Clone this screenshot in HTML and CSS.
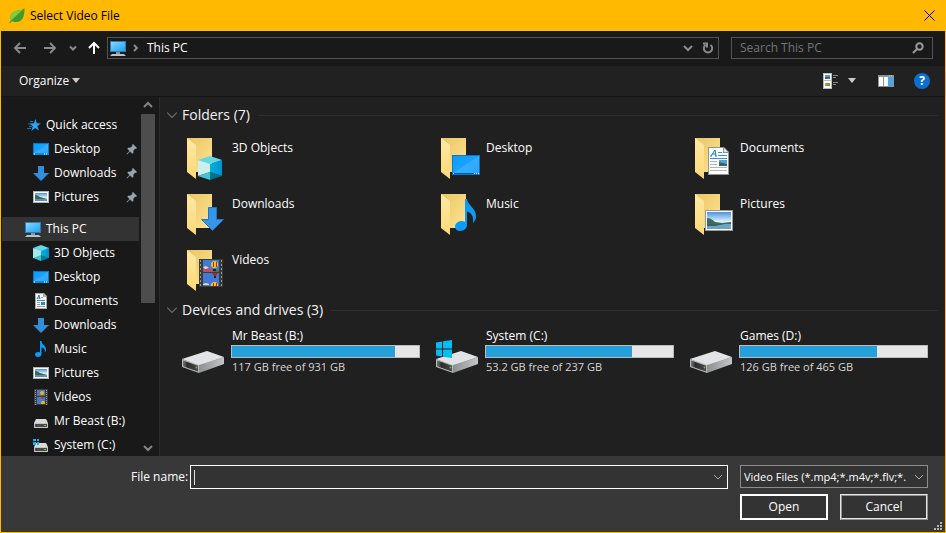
FILE: index.html
```
<!DOCTYPE html>
<html lang="en">

<head>
    <meta charset="utf-8">
    <title>Select Video File</title>
    <link rel="stylesheet" href="styles.css">
</head>

<body>
    <!-- Shared icons -->
    <svg class="sprite" width="0" height="0" aria-hidden="true">
        <defs>
            <linearGradient id="g-folder" x1="0" y1="0" x2="1" y2="1">
                <stop offset="0" stop-color="#e9c465" />
                <stop offset="1" stop-color="#ffe592" />
            </linearGradient>
            <linearGradient id="g-flap" x1="0" y1="0" x2="0" y2="1">
                <stop offset="0" stop-color="#ffe8a4" />
                <stop offset="1" stop-color="#fbd978" />
            </linearGradient>
            <linearGradient id="g-blue" x1="0" y1="0" x2="1" y2="1">
                <stop offset="0" stop-color="#0a9bff" />
                <stop offset="0.5" stop-color="#1aa2ff" />
                <stop offset="0.51" stop-color="#36adff" />
                <stop offset="1" stop-color="#2aa5ff" />
            </linearGradient>
            <linearGradient id="g-screen" x1="0" y1="0" x2="1" y2="1">
                <stop offset="0" stop-color="#8fd6ff" />
                <stop offset="0.5" stop-color="#4fbcfc" />
                <stop offset="1" stop-color="#22a4f5" />
            </linearGradient>
            <linearGradient id="g-sky" x1="0" y1="0" x2="0" y2="1">
                <stop offset="0" stop-color="#4f92e0" />
                <stop offset="0.55" stop-color="#d9effa" />
                <stop offset="1" stop-color="#b5d6ea" />
            </linearGradient>
            <linearGradient id="g-right" x1="0" y1="0" x2="1" y2="0">
                <stop offset="0" stop-color="#00b4d8" />
                <stop offset="1" stop-color="#0090d8" />
            </linearGradient>
            <linearGradient id="g-face" x1="0" y1="0" x2="1" y2="0">
                <stop offset="0" stop-color="#777" />
                <stop offset="0.3" stop-color="#2c2c2c" />
                <stop offset="1" stop-color="#4a4a4a" />
            </linearGradient>
            <linearGradient id="g-side" x1="0" y1="0" x2="1" y2="0">
                <stop offset="0" stop-color="#8d8f91" />
                <stop offset="1" stop-color="#c3c5c7" />
            </linearGradient>
        </defs>

        <symbol id="i-pc" viewBox="0 0 16 16">
            <rect x="0" y="1" width="16" height="11" fill="#2b7fb8" />
            <rect x="1" y="2" width="14" height="9" fill="url(#g-screen)" />
            <rect x="6" y="12" width="4" height="2" fill="#8a9298" />
            <path d="M2 14h12l2 2H0z" fill="#b9c2ca" />
        </symbol>
        <symbol id="i-star" viewBox="0 0 16 16">
            <path d="M10.600 2l1.100 4.300 4.300.2-3.600 2.600 1.500 4.500-3.700-2.700L6.300 14l1.500-4.700L4.500 6.500l4.300-.2z" fill="#2ea3f2" />
            <path d="M5 4.500h3M3 7h3M4 9.500h3M2 11.500h4" stroke="#1577c2" />
        </symbol>
        <symbol id="i-desktop" viewBox="0 0 16 16">
            <rect x="0" y="2" width="16" height="12" fill="#0878cc" />
            <rect x="1" y="3" width="14" height="9" fill="url(#g-blue)" />
            <rect x="0" y="12" width="16" height="2" fill="#1188d8" />
            <path d="M1 13h1M11 13h1M13 13h1" stroke="#fff" />
        </symbol>
        <symbol id="i-download" viewBox="0 0 16 16">
            <path d="M5 1h6v7h5l-8 8-8-8h5z" fill="#2f8fdd" />
        </symbol>
        <symbol id="i-picture" viewBox="0 0 16 16">
            <rect x="0" y="2" width="16" height="12" fill="#b4b4b4" />
            <rect x="1" y="3" width="14" height="10" fill="#fff" />
            <rect x="2" y="4" width="12" height="8" fill="url(#g-sky)" />
            <path d="M2 6q3 0 5 2l7 2v1H2z" fill="#3a6654" />
            <path d="M2 10h12v2H2z" fill="#5b92b4" />
        </symbol>
        <symbol id="i-cube" viewBox="0 0 16 16">
            <path d="M0 3l8 2v8l-8 0z" fill="#a8e8ec" />
            <path d="M16 3L8 5v8l8 0z" fill="url(#g-right)" />
            <path d="M8 0l8 3-8 3-8-3z" fill="#63d7e6" />
            <path d="M0 13l8-3v6z" fill="#3fc0cc" />
            <path d="M16 13l-8-3v6z" fill="#007c9c" />
        </symbol>
        <symbol id="i-document" viewBox="0 0 16 16">
            <path d="M2 0h9l3 3v13H2z" fill="#aaa" />
            <path d="M3 1h7v3h3v11H3z" fill="#fff" />
            <path d="M4 6l2-4 1 4M5 5h2" fill="none" stroke="#1a7cc8" />
            <path d="M4 7.500h8" stroke="#2e94dd" />
            <path d="M8 4.500h2M4 9.500h3M4 11.500h3M4 13.500h8" stroke="#9a9a9a" />
            <rect x="8" y="9" width="4" height="3" fill="#3885b6" />
        </symbol>
        <symbol id="i-music" viewBox="0 0 16 16">
            <path d="M7 0h1.500c0 4 5 4.500 4.500 9-.1 1-.6 2-1.300 2.600.8-3-1-4.600-3.200-5.100V13c0 1.700-1.500 3-3.500 3S2 15 2 13.500 3.500 11 5.200 11c.7 0 1.300.1 1.800.4z" fill="#0c9bf5" />
        </symbol>
        <symbol id="i-video" viewBox="0 0 16 16">
            <rect x="1" y="0" width="14" height="16" fill="#3c3c3c" />
            <path d="M2.500 1v15M13.500 1v15" stroke="#999" stroke-dasharray="1 1" />
            <rect x="4" y="1" width="8" height="6" fill="#447cd0" />
            <rect x="4" y="8" width="8" height="7" fill="#447cd0" />
            <circle cx="9" cy="4" r="2" fill="#e0b41c" />
            <path d="M4 6h4v1H4z" fill="#bb4763" />
            <path d="M8 6h4v1H8z" fill="#37803b" />
            <path d="M8 13l1-1h2l1 1v2H8z" fill="#e0b41c" />
            <path d="M8 8h3l-1 2H9z" fill="#b33" />
        </symbol>
        <symbol id="i-drive" viewBox="0 0 16 16">
            <path d="M3 6h10l2 4H1z" fill="#d9dadb" />
            <rect x="1" y="10" width="14" height="5" fill="#c4c4c4" />
            <rect x="2" y="11" width="12" height="3" fill="#4a4a4a" />
            <rect x="11" y="12" width="2" height="1" fill="#3fe23f" />
        </symbol>
        <symbol id="i-sysdrive" viewBox="0 0 16 16">
            <path d="M3 6h10l2 4H1z" fill="#d9dadb" />
            <rect x="1" y="10" width="14" height="5" fill="#c4c4c4" />
            <rect x="2" y="11" width="12" height="3" fill="#4a4a4a" />
            <rect x="11" y="12" width="2" height="1" fill="#3fe23f" />
            <path d="M0 2h3v2H0zM4 2h2v2H4zM0 5h3v3H0zM4 5h2v3H4z" fill="#13b4f2" />
        </symbol>
        <symbol id="i-pin" viewBox="0 0 12 12">
            <path d="M7 1l4 4-1 1-1-.3L7.500 7.500 7.300 10l-1 .7-2.300-2.300L1 11.500l-.5-.5 3-3L1.300 5.700l.8-1 2.400-.2L6.300 3 6 2z" fill="#98a3ac" />
        </symbol>
        <symbol id="i-chevron" viewBox="0 0 10 10">
            <path d="M1 3l4 4 4-4" fill="none" stroke="currentColor" />
        </symbol>
        <symbol id="i-folder" viewBox="0 0 48 48">
            <path d="M5 4h25v34H5z" fill="url(#g-folder)" />
            <path d="M5 4l9 7v34l-9-7z" fill="url(#g-flap)" />
        </symbol>
        <symbol id="i-bigdrive" viewBox="0 0 48 48">
            <path d="M0 31l25-8 17 6-25 9z" fill="#e2e3e5" />
            <path d="M17 37l25-8v7l-25 9z" fill="url(#g-side)" />
            <path d="M0 31l17 6v8L0 39z" fill="#b5b7b8" />
            <path d="M1 32.500l15 5.300v5.800L1 38.200z" fill="url(#g-face)" />
            <circle cx="14.500" cy="39.500" r="1" fill="#35d63a" />
        </symbol>
    </svg>

    <div class="window">
        <header class="title-bar">
            <svg class="leaf" viewBox="0 0 16 16" aria-hidden="true">
                <path d="M15.500 0C15.500 8 14 14 7 14c-2 0-3-.3-4-1L1 15.500l-.7-.5L2 12C0 6 4 3 9 2.500c3-.3 5-1 6.500-2.500z" fill="#3f9b2f" />
                <path d="M15.500 0C14 1.500 12 2.200 9 2.500 3 3 0 7 2 12.500z" fill="#86cb3e" />
            </svg>
            <span class="title">Select Video File</span>
            <button class="close" aria-label="Close">
                <svg viewBox="0 0 11 11"><path d="M.5.5l10 10M10.500.5l-10 10" stroke="#000" /></svg>
            </button>
        </header>

        <nav class="nav-bar">
            <button class="nav-button" aria-label="Back">
                <svg viewBox="0 0 14 14"><path d="M13 7H2M7 2L2 7l5 5" /></svg>
            </button>
            <button class="nav-button" aria-label="Forward">
                <svg viewBox="0 0 14 14"><path d="M1 7h11M7 2l5 5-5 5" /></svg>
            </button>
            <button class="nav-button recent" aria-label="Recent locations">
                <svg viewBox="0 0 8 8"><path d="M1 2.500l3 3 3-3" /></svg>
            </button>
            <button class="nav-button up" aria-label="Up">
                <svg viewBox="0 0 14 14"><path d="M7 13V2M2 7l5-5 5 5" /></svg>
            </button>
            <div class="address">
                <svg class="icon"><use href="#i-pc" /></svg>
                <svg class="crumb" viewBox="0 0 6 8"><path d="M1 1l3 3-3 3" /></svg>
                <a href="#">This PC</a>
                <button class="address-button" aria-label="Previous locations">
                    <svg viewBox="0 0 12 12"><path d="M2 4l4 4 4-4" /></svg>
                </button>
                <button class="address-button refresh" aria-label="Refresh">
                    <svg viewBox="0 0 12 12"><path d="M8.500 3A4.200 4.200 0 1 1 3.500 3M1 1.500h4v4" /></svg>
                </button>
            </div>
            <div class="search">
                <input type="text" placeholder="Search This PC" aria-label="Search This PC">
                <svg viewBox="0 0 12 12"><circle cx="7.500" cy="4.500" r="3.200" /><path d="M5 7l-4 4" /></svg>
            </div>
        </nav>

        <div class="toolbar">
            <button class="organize">Organize <span class="arrow"></span></button>
            <button class="view" aria-label="Change your view">
                <svg viewBox="0 0 16 16">
                    <path d="M0 0h9v16H0z" fill="#bbb" />
                    <path d="M1 1h7v6H1zM1 8h7v7H1z" fill="#fff" />
                    <path d="M2 2h5v2H2z" fill="#4f92e0" />
                    <path d="M2 4h5v2H2z" fill="#346d71" />
                    <path d="M2 10h5v3H2z" fill="#6aa343" />
                    <path d="M2 10h2v2H2z" fill="#e08d2d" />
                    <path d="M10 2.500h5M10 4.500h3M10 9.500h5M10 11.500h3" stroke="#888" />
                </svg>
                <span class="arrow"></span>
            </button>
            <button class="preview" aria-label="Preview pane">
                <svg viewBox="0 0 16 12">
                    <path d="M0 0h16v12H0z" fill="#8c9299" />
                    <path d="M1 2h4v9H1zM6 2h4v9H6z" fill="#fff" />
                    <path d="M10 2h5v9h-5z" fill="#4aa5ec" />
                    <path d="M11 1h1M13 1h1" stroke="#ddd" />
                </svg>
            </button>
            <button class="help" aria-label="Help">?</button>
        </div>

        <div class="content">
            <aside class="sidebar">
                <ul class="tree">
                    <li class="root"><svg class="icon"><use href="#i-star" /></svg><a href="#">Quick access</a></li>
                    <li><svg class="icon"><use href="#i-desktop" /></svg><a href="#">Desktop</a><svg class="pin"><use href="#i-pin" /></svg></li>
                    <li><svg class="icon"><use href="#i-download" /></svg><a href="#">Downloads</a><svg class="pin"><use href="#i-pin" /></svg></li>
                    <li><svg class="icon"><use href="#i-picture" /></svg><a href="#">Pictures</a><svg class="pin"><use href="#i-pin" /></svg></li>
                </ul>
                <ul class="tree">
                    <li class="root selected"><svg class="icon"><use href="#i-pc" /></svg><a href="#">This PC</a></li>
                    <li><svg class="icon"><use href="#i-cube" /></svg><a href="#">3D Objects</a></li>
                    <li><svg class="icon"><use href="#i-desktop" /></svg><a href="#">Desktop</a></li>
                    <li><svg class="icon"><use href="#i-document" /></svg><a href="#">Documents</a></li>
                    <li><svg class="icon"><use href="#i-download" /></svg><a href="#">Downloads</a></li>
                    <li><svg class="icon"><use href="#i-music" /></svg><a href="#">Music</a></li>
                    <li><svg class="icon"><use href="#i-picture" /></svg><a href="#">Pictures</a></li>
                    <li><svg class="icon"><use href="#i-video" /></svg><a href="#">Videos</a></li>
                    <li><svg class="icon"><use href="#i-drive" /></svg><a href="#">Mr Beast (B:)</a></li>
                    <li><svg class="icon"><use href="#i-sysdrive" /></svg><a href="#">System (C:)</a></li>
                </ul>
            </aside>
            <div class="scrollbar">
                <button class="scroll-up" aria-label="Scroll up"><svg><use href="#i-chevron" /></svg></button>
                <div class="track"><div class="thumb"></div></div>
                <button aria-label="Scroll down"><svg><use href="#i-chevron" /></svg></button>
            </div>

            <main class="files">
                <h2><svg><use href="#i-chevron" /></svg>Folders (7)</h2>
                <div class="grid folders">
                    <a class="item" href="#">
                        <svg viewBox="0 0 48 48">
                            <use href="#i-folder" />
                            <path d="M16 26l12 4v8l-12 4z" fill="#c9f1f2" />
                            <path d="M40 26l-12 4v8l12 4z" fill="url(#g-right)" />
                            <path d="M28 22l12 4-12 4-12-4z" fill="#63d7e6" />
                            <path d="M16 42l12-4v8z" fill="#41c6d3" />
                            <path d="M40 42l-12-4v8z" fill="#007391" />
                        </svg>
                        <span>3D Objects</span>
                    </a>
                    <a class="item" href="#">
                        <svg viewBox="0 0 48 48">
                            <use href="#i-folder" />
                            <rect x="16" y="21" width="28" height="20" fill="#0878cc" />
                            <rect x="17" y="22" width="26" height="17" fill="url(#g-blue)" />
                            <rect x="17" y="39" width="26" height="1" fill="#0a5c9c" />
                            <path d="M17 39.500h1M38 39.500h1M40 39.500h1M42 39.500h1" stroke="#fff" />
                        </svg>
                        <span>Desktop</span>
                    </a>
                    <a class="item" href="#">
                        <svg viewBox="0 0 48 48">
                            <use href="#i-folder" />
                            <path d="M18 13h16l5 5v23H18z" fill="#8f9499" />
                            <path d="M19 14h14v5h5v21H19z" fill="#fff" />
                            <path d="M34 14l4 4h-4z" fill="#e4e4e4" />
                            <path d="M21 22l4-6 1 6M22 20h4M20 22h2M25 22h2" fill="none" stroke="#1a7cc8" />
                            <path d="M28 18.500h4M28 21.500h9M20 24.500h17" stroke="#2e94dd" />
                            <path d="M20 27.500h7M20 30.500h7M20 33.500h17M20 36.500h17" stroke="#b4b4b4" />
                            <rect x="29" y="26" width="8" height="6" fill="#5d9fd8" />
                            <path d="M29 28l8 2v2h-8z" fill="#376d58" />
                        </svg>
                        <span>Documents</span>
                    </a>
                    <a class="item" href="#">
                        <svg viewBox="0 0 48 48">
                            <use href="#i-folder" />
                            <path d="M26.500 17.500h8v12h7L30.500 40.500l-11-11h7z" fill="#3795e8" stroke="#1f75bf" />
                        </svg>
                        <span>Downloads</span>
                    </a>
                    <a class="item" href="#">
                        <svg viewBox="0 0 48 48">
                            <use href="#i-folder" />
                            <path d="M29 9h2c1 7 9 9 9 17 0 3-1 5-3 7 1-7-2-10.500-6-11.500V35c0 3-3 6-7 6-3 0-5-2-5-4.500 0-3 3-5.500 6.500-5.500 1.500 0 2.500.3 3.500 1z" fill="#0c9bf5" />
                        </svg>
                        <span>Music</span>
                    </a>
                    <a class="item" href="#">
                        <svg viewBox="0 0 48 48">
                            <use href="#i-folder" />
                            <rect x="15" y="20" width="28" height="21" fill="#999" />
                            <rect x="16" y="21" width="26" height="19" fill="#fff" />
                            <rect x="17" y="22" width="24" height="17" fill="url(#g-sky)" />
                            <path d="M17 28q4 0 8 4l7 1 9-1v3H17z" fill="#3d6b5c" />
                            <path d="M17 34h24v5H17z" fill="#6fa5c4" />
                            <path d="M17 34h18l-10 2h-8z" fill="#36606a" />
                        </svg>
                        <span>Pictures</span>
                    </a>
                    <a class="item" href="#">
                        <svg viewBox="0 0 48 48">
                            <use href="#i-folder" />
                            <rect x="17" y="13" width="24" height="28" fill="#3b3b3b" />
                            <path d="M18.500 14v27M39.500 14v27" stroke="#999" stroke-dasharray="2 2" />
                            <path d="M21 14h16v12H21zM21 27h16v13H21z" fill="#3f7bd6" />
                            <path d="M21 24l4-2 6 2v2H21z" fill="#c8465f" />
                            <path d="M31 24h6v2h-6z" fill="#37803b" />
                            <path d="M21 21l3-1 3 2-4 1z" fill="#efd9a0" />
                            <circle cx="32.500" cy="18.500" r="3.500" fill="#f0c21b" />
                            <path d="M31.500 16v5M34.500 16v5" stroke="#b3261e" />
                            <path d="M31 23h3v2h-3z" fill="#222" />
                            <path d="M30 27h6l-2 3h-2z" fill="#b3261e" />
                            <path d="M32 30h2v2h-2z" fill="#222" />
                            <path d="M21 38l3-1 3 1v1h-6z" fill="#efd9a0" />
                            <path d="M29 40v-2l2-2h3l2 2v2z" fill="#f0c21b" />
                            <path d="M31.500 37v3M34.500 37v3" stroke="#b3261e" />
                        </svg>
                        <span>Videos</span>
                    </a>
                </div>

                <h2><svg><use href="#i-chevron" /></svg>Devices and drives (3)</h2>
                <div class="grid drives">
                    <a class="item" href="#">
                        <svg viewBox="0 0 48 48"><use href="#i-bigdrive" /></svg>
                        <div class="drive-info">
                            <span>Mr Beast (B:)</span>
                            <div class="usage"><div style="width: 87%"></div></div>
                            <span class="free">117 GB free of 931 GB</span>
                        </div>
                    </a>
                    <a class="item" href="#">
                        <svg viewBox="0 0 48 48">
                            <use href="#i-bigdrive" />
                            <path d="M0 14.500l6-1v7H0zM7 13.300l9-1.300v8.500H7zM0 21.500h6v7l-6-1zM7 21.500h9V30l-9-1.300z" fill="#00bdf2" />
                        </svg>
                        <div class="drive-info">
                            <span>System (C:)</span>
                            <div class="usage"><div style="width: 78%"></div></div>
                            <span class="free">53.2 GB free of 237 GB</span>
                        </div>
                    </a>
                    <a class="item" href="#">
                        <svg viewBox="0 0 48 48"><use href="#i-bigdrive" /></svg>
                        <div class="drive-info">
                            <span>Games (D:)</span>
                            <div class="usage"><div style="width: 73%"></div></div>
                            <span class="free">126 GB free of 465 GB</span>
                        </div>
                    </a>
                </div>
            </main>
        </div>

        <footer class="footer">
            <label for="file-name">File name:</label>
            <div class="file-name">
                <input type="text" id="file-name">
                <button aria-label="Show file names"><svg><use href="#i-chevron" /></svg></button>
            </div>
            <div class="actions">
                <div class="file-type">
                    <select aria-label="File type">
                        <option>Video Files (*.mp4;*.m4v;*.flv;*.</option>
                    </select>
                    <svg><use href="#i-chevron" /></svg>
                </div>
                <button class="open">Open</button>
                <button class="cancel">Cancel</button>
            </div>
            <svg class="grip" viewBox="0 0 8 8" aria-hidden="true">
                <path d="M6 0h2v2H6zM3 3h2v2H3zM6 3h2v2H6zM0 6h2v2H0zM3 6h2v2H3zM6 6h2v2H6z" fill="#b5b5b5" />
            </svg>
        </footer>
    </div>
</body>

</html>
```
FILE: styles.css
```
* {
    box-sizing: border-box;
}

body {
    margin: 0;
    background-color: #202020;
    color: #fff;
    font-family: "Open Sans", "Noto Sans", sans-serif;
    font-size: 12px;
    line-height: 16px;
}

svg {
    display: block;
    flex-shrink: 0;
}

a {
    color: inherit;
    text-decoration: none;
}

button {
    display: flex;
    align-items: center;
    justify-content: center;
    padding: 0;
    border: none;
    background: none;
    color: inherit;
    font: inherit;
}

input,
select {
    color: inherit;
    font: inherit;
}

.window {
    display: flex;
    flex-direction: column;
    height: 100vh;
    border: 1px solid #ffb900;
    border-top: none;
}

.icon {
    width: 16px;
    height: 16px;
}

/* Title bar */
.title-bar {
    display: flex;
    align-items: center;
    height: 31px;
    padding-left: 8px;
    background-color: #ffb900;
    color: #000;
}

.leaf {
    width: 16px;
    height: 16px;
}

.title {
    flex: 1;
    margin-left: 5px;
}

.close {
    width: 31px;
    height: 31px;
}

.close svg {
    width: 11px;
    height: 11px;
}

/* Navigation bar */
.nav-bar {
    display: flex;
    align-items: center;
    height: 35px;
    padding: 0 12px 1px 4px;
    background-color: #191919;
}

.nav-button {
    width: 30px;
    height: 24px;
}

.nav-button svg {
    width: 14px;
    height: 14px;
    fill: none;
    stroke: #8a8a8a;
    stroke-width: 2;
}

.nav-button.recent {
    width: 16px;
}

.nav-button.recent svg {
    width: 8px;
    height: 8px;
}

.nav-button.up {
    width: 26px;
}

.nav-button.up svg {
    stroke: #fff;
}

.address {
    display: flex;
    flex: 1;
    align-items: center;
    height: 22px;
    padding-left: 2px;
    border: 1px solid #535353;
}

.crumb {
    width: 6px;
    height: 8px;
    margin: 0 8px 0 7px;
    fill: none;
    stroke: #8a8a8a;
    stroke-width: 2;
}

.address a {
    flex: 1;
}

.address-button {
    width: 20px;
    height: 20px;
}

.address-button svg {
    width: 12px;
    height: 12px;
    fill: none;
    stroke: #8a8a8a;
    stroke-width: 2;
}

.search {
    display: flex;
    align-items: center;
    width: 202px;
    height: 22px;
    margin-left: 12px;
    padding: 0 8px;
    border: 1px solid #535353;
}

.search input {
    flex: 1;
    min-width: 0;
    padding: 0;
    border: none;
    outline: none;
    background: none;
}

.search input::placeholder {
    color: #757575;
}

.search svg {
    width: 12px;
    height: 12px;
    fill: none;
    stroke: #9a9a9a;
    stroke-width: 2;
}

/* Toolbar */
.toolbar {
    display: flex;
    align-items: center;
    height: 31px;
    padding: 0 15px 1px 18px;
    border-bottom: 1px solid #151515;
    background-color: #212121;
}

.organize {
    margin-right: auto;
}

.arrow {
    margin-left: 3px;
    border: 4px solid transparent;
    border-top: 5px solid #ccc;
    border-bottom: none;
}

.view svg {
    width: 16px;
    height: 16px;
}

.view .arrow {
    margin-left: 9px;
}

.preview {
    margin: 0 20px 0 22px;
}

.preview svg {
    width: 16px;
    height: 12px;
}

.help {
    width: 16px;
    height: 16px;
    border-radius: 8px;
    background-color: #0a6fd0;
    font-weight: bold;
}

/* Sidebar */
.content {
    display: flex;
    flex: 1;
    min-height: 0;
}

.sidebar {
    width: 138px;
    padding: 16px 0 0 1px;
    overflow: hidden;
    background-color: #191919;
}

.tree {
    margin: 0 0 8px;
    padding: 0;
    list-style: none;
}

.tree li {
    display: flex;
    align-items: center;
    gap: 5px;
    height: 24px;
    padding: 0 1px 0 31px;
    white-space: nowrap;
}

.tree .root {
    padding-left: 23px;
}

.tree .selected {
    background-color: #333;
}

.pin {
    width: 12px;
    height: 12px;
    margin-left: auto;
}

.scrollbar {
    display: flex;
    flex-direction: column;
    width: 21px;
    padding: 0 4px 0 2px;
    border-right: 1px solid #2b2b2b;
    background-color: #191919;
}

.scrollbar button {
    height: 17px;
    color: #868686;
}

.scrollbar svg {
    width: 10px;
    height: 10px;
    stroke-width: 2;
}

.scroll-up {
    transform: rotate(180deg);
}

.track {
    flex: 1;
}

.thumb {
    height: 58%;
    background-color: #4d4d4d;
}

/* Files */
.files {
    flex: 1;
    min-width: 0;
    padding: 6px 0 0 6px;
    overflow: hidden;
    background-color: #202020;
}

h2 {
    display: flex;
    align-items: center;
    height: 24px;
    margin: 0 7px 7px 0;
    font-size: 14px;
    font-weight: normal;
    color: #f2f2f2;
}

h2 svg {
    width: 12px;
    height: 12px;
    margin-right: 4px;
    color: #6c6c6c;
}

h2::after {
    flex: 1;
    height: 1px;
    margin-left: 8px;
    background-color: #2e2e2e;
    content: "";
}

.grid {
    display: grid;
    grid-template-columns: repeat(auto-fill, 254px);
    padding-left: 16px;
}

.folders {
    row-gap: 8px;
    margin-bottom: 4px;
}

.item {
    display: flex;
}

.item > svg {
    width: 48px;
    height: 48px;
}

.folders span {
    margin: 6px 0 0 2px;
}

.drives {
    margin-top: -1px;
}

.drive-info {
    width: 190px;
    padding-left: 1px;
}

.drive-info span {
    display: block;
    padding-left: 1px;
}

.drive-info .free {
    color: #d6d6d6;
    font-size: 11px;
}

.usage {
    height: 13px;
    margin: 1px 0;
    border: 1px solid #bcbcbc;
    background-color: #e6e6e6;
}

.usage div {
    height: 100%;
    background-color: #26a0da;
}

/* Footer */
.footer {
    position: relative;
    display: flex;
    height: 76px;
    padding: 9px 17px 12px 130px;
    background-color: #383838;
}

.footer label {
    width: 54px;
    margin: 4px 5px 0 0;
    white-space: nowrap;
}

.file-name {
    display: flex;
    flex: 1;
    height: 24px;
    margin-right: 12px;
    border: 1px solid #fff;
    background-color: #333;
}

.file-name input {
    flex: 1;
    min-width: 0;
    padding: 0 6px;
    border: none;
    outline: none;
    background: linear-gradient(#ddd, #ddd) 3px center / 1px 15px no-repeat;
}

.file-name button {
    width: 18px;
    color: #aaa;
}

.footer svg {
    width: 10px;
    height: 10px;
}

.actions {
    display: grid;
    grid-template-columns: 88px 88px;
    grid-template-rows: 23px 26px;
    gap: 6px 12px;
}

.file-type {
    position: relative;
    grid-column: span 2;
}

.file-type select {
    width: 100%;
    height: 100%;
    padding: 0 16px 0 3px;
    border: 1px solid #8c8c8c;
    border-radius: 0;
    appearance: none;
    background-color: #333;
    font-size: 11px;
}

.file-type svg {
    position: absolute;
    top: 7px;
    right: 4px;
    color: #aaa;
    pointer-events: none;
}

.open,
.cancel {
    border: 2px solid #fff;
    background-color: #333;
}

.cancel {
    border: 2px ridge #e6e6e6;
}

.footer .grip {
    position: absolute;
    right: 3px;
    bottom: 2px;
    width: 8px;
    height: 8px;
}
```
